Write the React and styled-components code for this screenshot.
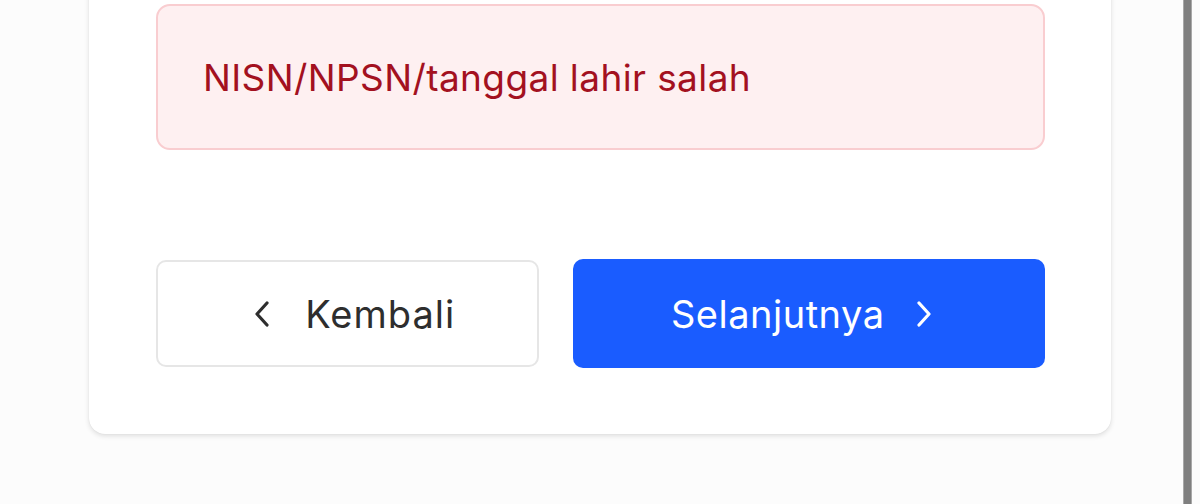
import React from "react";
import styled, { createGlobalStyle } from "styled-components";

const Global = createGlobalStyle`
  html, body { margin: 0; padding: 0; background: #fcfcfc; overflow: hidden; }
  body { font-family: Inter, "Noto Sans", sans-serif; }
  * { box-sizing: border-box; }
`;

const Page = styled.div`
  display: flex;
  width: 1200px;
  height: 504px;
  background: #fcfcfc;
`;

const Main = styled.div`
  flex: 1;
  padding: 0 72px 0 89px;
`;

const ScrollLine = styled.div`
  width: 9px;
  margin-right: 8px;
  background: #7f7f7f;
  border-left: 1px solid #a8a8a8;
  border-right: 1px solid #a8a8a8;
`;

const Card = styled.div`
  margin-top: -40px;
  background: #ffffff;
  border-radius: 0 0 16px 16px;
  box-shadow: 0 2px 5px rgba(0, 0, 0, 0.12), 0 0 1px rgba(0, 0, 0, 0.1);
  padding: 44px 66px 66px 67px;
  display: flex;
  flex-direction: column;
`;

const ErrorBox = styled.div`
  height: 146px;
  background: #fef0f1;
  border: 2px solid #f9cdd0;
  border-radius: 14px;
  display: flex;
  align-items: center;
  padding: 0 45px;
  color: #a3111f;
  font-size: 37px;
  letter-spacing: 0.4px;
  font-weight: 400;
`;

const Actions = styled.div`
  margin-top: 109px;
  display: grid;
  grid-template-columns: 383fr 471fr;
  gap: 34px;
  align-items: center;
`;

const Button = styled.button`
  font-family: Inter, "Noto Sans", sans-serif;
  height: ${(p) => (p.$primary ? "109px" : "107px")};
  border-radius: 10px;
  border: ${(p) => (p.$primary ? "none" : "2px solid #e6e6e6")};
  background: ${(p) => (p.$primary ? "#1a5cff" : "#ffffff")};
  color: ${(p) => (p.$primary ? "#ffffff" : "#2e2e2e")};
  font-size: 38px;
  letter-spacing: ${(p) => (p.$primary ? "0.5px" : "1px")};
  display: flex;
  align-items: center;
  justify-content: center;
  gap: ${(p) => (p.$primary ? "31px" : "34px")};
  padding: 0;
  cursor: pointer;
`;

const Icon = styled.svg`
  flex: none;
  margin-left: ${(p) => (p.$dir === "left" ? "13px" : "0")};
  margin-right: ${(p) => (p.$dir === "right" ? "14px" : "0")};
`;

const Chevron = ({ dir }) => (
  <Icon $dir={dir} width="18" height="26" viewBox="0 0 18 26" fill="none">
    <path
      d={dir === "left" ? "M14 2 L4 13 L14 24" : "M4 2 L14 13 L4 24"}
      stroke="currentColor"
      strokeWidth="3.2"
      strokeLinecap="round"
      strokeLinejoin="round"
    />
  </Icon>
);

export default function App() {
  return (
    <>
      <Global />
      <Page>
        <Main>
          <Card>
            <ErrorBox>NISN/NPSN/tanggal lahir salah</ErrorBox>
            <Actions>
              <Button>
                <Chevron dir="left" />
                Kembali
              </Button>
              <Button $primary>
                Selanjutnya
                <Chevron dir="right" />
              </Button>
            </Actions>
          </Card>
        </Main>
        <ScrollLine />
      </Page>
    </>
  );
}
